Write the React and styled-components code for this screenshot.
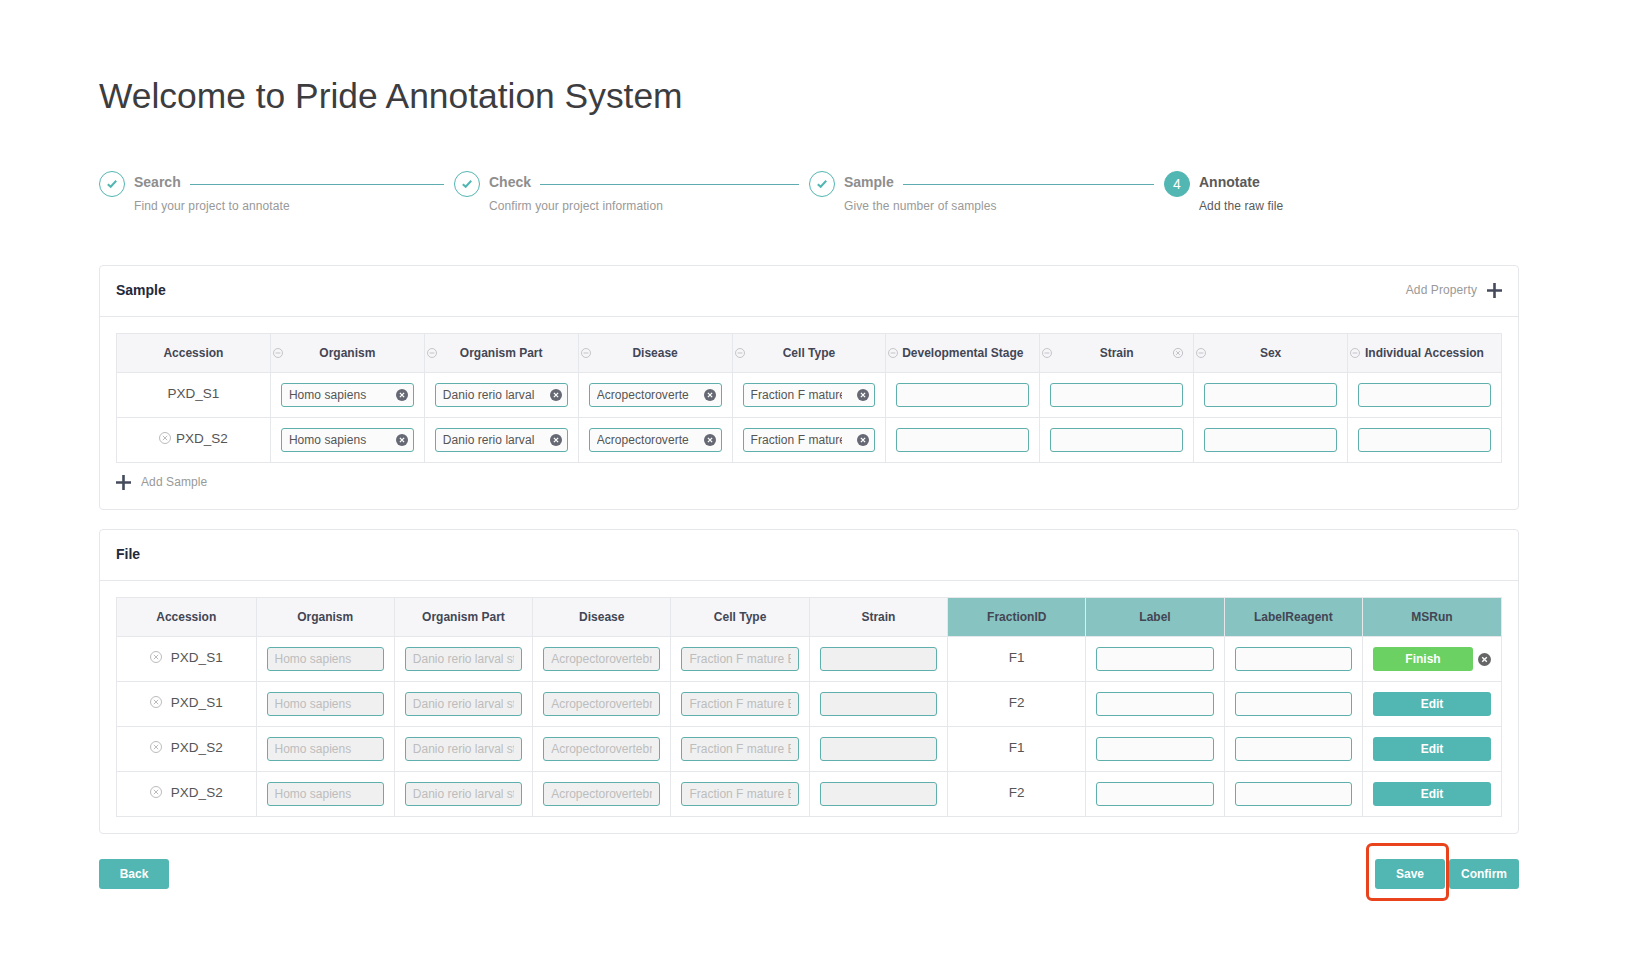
import React from 'react';
import styled, { createGlobalStyle } from 'styled-components';

const teal = '#52b6b2';
const line = '#e6e7eb';

const GlobalStyle = createGlobalStyle`
  html, body {
    margin: 0;
    background: #fff;
    font-family: "Liberation Sans", Arial, sans-serif;
  }
`;

const Page = styled.div`
  width: 1420px;
  min-height: 878px;
  padding: 75px 132px 0 99px;
`;

const Title = styled.h1`
  margin: 0 0 54px;
  font-size: 35.4px;
  line-height: 42px;
  font-weight: 400;
  color: #3d3d3f;
`;

const Steps = styled.div`
  display: grid;
  grid-template-columns: repeat(4, 355px);
  margin-bottom: 49px;
`;

const Step = styled.div`
  display: flex;
  padding-right: 10px;
`;

const StepIcon = styled.div`
  flex: none;
  width: 26px;
  height: 26px;
  margin-right: 9px;
  box-sizing: border-box;
  border-radius: 50%;
  border: 1px solid ${teal};
  background: ${(p) => (p.$active ? teal : '#fff')};
  color: ${(p) => (p.$active ? '#fff' : teal)};
  display: flex;
  align-items: center;
  justify-content: center;
  font-size: 14px;
`;

const StepBody = styled.div`
  flex: 1;
`;

const StepHead = styled.div`
  display: flex;
  align-items: center;
  height: 22px;
  gap: 9px;
`;

const StepTitle = styled.div`
  font-size: 14px;
  font-weight: 700;
  color: ${(p) => (p.$active ? '#5a5a5a' : '#8e8e8e')};
`;

const StepLine = styled.div`
  flex: 1;
  height: 1px;
  margin-top: 4px;
  background: #5dadb0;
`;

const StepDesc = styled.div`
  margin-top: 3px;
  font-size: 12px;
  line-height: 20px;
  letter-spacing: 0.1px;
  color: ${(p) => (p.$active ? '#5a5a5a' : '#999')};
`;

const Card = styled.section`
  border: 1px solid ${line};
  border-radius: 4px;
  margin-bottom: 19px;
  background: #fff;
`;

const CardHead = styled.div`
  height: 48px;
  padding: 0 16px 2px;
  display: flex;
  align-items: center;
  justify-content: space-between;
  border-bottom: 1px solid ${line};
`;

const CardTitle = styled.div`
  font-size: 14px;
  font-weight: 700;
  color: #23283a;
`;

const CardBody = styled.div`
  padding: 16px 16px ${(p) => p.$bottom}px;
`;

const AddLink = styled.div`
  display: flex;
  align-items: center;
  gap: 10px;
  font-size: 12px;
  letter-spacing: 0.1px;
  color: #999;
`;

const AddRow = styled(AddLink)`
  height: 38px;
`;

const Table = styled.table`
  width: 1386px;
  table-layout: fixed;
  border-collapse: collapse;
  font-size: 13.5px;
`;

const Th = styled.th`
  position: relative;
  width: ${(p) => p.$width || 'auto'};
  height: 38px;
  padding: 0;
  border: 1px solid ${line};
  background: ${(p) => (p.$teal ? '#87c3c1' : '#f6f6f9')};
  font-size: 12px;
  font-weight: 700;
  color: #434654;
  text-align: center;
`;

const Td = styled.td`
  height: 44px;
  padding: 0 10px;
  border: 1px solid ${line};
  text-align: center;
  color: #555;
`;

const Accession = styled.div`
  display: flex;
  align-items: center;
  justify-content: center;
  gap: ${(p) => p.$gap}px;
  margin-bottom: 4px;
`;

const HeadIcon = styled.span`
  position: absolute;
  top: 14px;
  left: ${(p) => (p.$right ? 'auto' : '2px')};
  right: ${(p) => (p.$right ? '10px' : 'auto')};
  display: flex;
  color: #b9b9bd;
`;

const InputWrap = styled.div`
  position: relative;
  display: flex;
`;

const Input = styled.input`
  width: 100%;
  height: 24px;
  box-sizing: border-box;
  margin: 0;
  padding: ${(p) => (p.$clearable ? '0 32px 0 7px' : '0 7px')};
  border: 1px solid #5fb0ac;
  border-radius: 3px;
  outline: none;
  font-family: inherit;
  font-size: 12px;
  letter-spacing: 0.05px;
  color: #555;
  background: #fbfbfb;

  &:disabled {
    background: #f0f0f0;
    color: #bdbdbd;
    letter-spacing: 0;
    -webkit-text-fill-color: #bdbdbd;
    opacity: 1;
  }
`;

const ClearSpot = styled.span`
  position: absolute;
  top: 6px;
  right: 6px;
  display: flex;
`;

const Button = styled.button`
  height: ${(p) => (p.$big ? 30 : 24)}px;
  width: ${(p) => p.$width || '100%'};
  padding: 0;
  border: 0;
  border-radius: 3px;
  background: ${(p) => (p.$green ? '#6ad162' : teal)};
  color: #fff;
  font-family: inherit;
  font-size: 12px;
  font-weight: 700;
`;

const RunCell = styled.div`
  display: flex;
  align-items: center;
  justify-content: space-between;
`;

const Footer = styled.div`
  display: flex;
  align-items: center;
  justify-content: space-between;
  margin-top: 25px;
`;

const FooterRight = styled.div`
  display: flex;
  gap: 4px;
`;

const SaveSpot = styled.div`
  position: relative;
  display: flex;

  &::after {
    content: '';
    position: absolute;
    inset: -16px -4px -12px -9px;
    border: 3px solid #e8431c;
    border-radius: 6px;
    pointer-events: none;
  }
`;

const CheckIcon = () => (
  <svg width="12" height="10" viewBox="0 0 12 10" fill="none">
    <path d="M1.8 5.2 L4.7 7.8 L10.2 1.8" stroke="currentColor" strokeWidth="2" />
  </svg>
);

const Plus = () => (
  <svg width="15" height="15" viewBox="0 0 15 15">
    <path d="M0 6.2h15v2.6H0zM6.2 0h2.6v15H6.2z" fill="#454b5c" />
  </svg>
);

const MinusCircle = () => (
  <svg width="10" height="10" viewBox="0 0 10 10" fill="none" stroke="currentColor" strokeWidth="0.8">
    <circle cx="5" cy="5" r="4.5" />
    <path d="M2.6 5h4.8" />
  </svg>
);

const XCircle = ({ size = 12, color = '#a9a9ad' }) => (
  <svg width={size} height={size} viewBox="0 0 12 12" fill="none" stroke={color} strokeWidth="0.8">
    <circle cx="6" cy="6" r="5.5" />
    <path d="M3.8 3.8l4.4 4.4M8.2 3.8l-4.4 4.4" />
  </svg>
);

const ClearIcon = ({ size = 12, color = '#666974' }) => (
  <svg width={size} height={size} viewBox="0 0 12 12" fill="none">
    <circle cx="6" cy="6" r="6" fill={color} />
    <path d="M3.9 3.9l4.2 4.2M8.1 3.9l-4.2 4.2" stroke="#fff" strokeWidth="1.3" />
  </svg>
);

const steps = [
  { title: 'Search', desc: 'Find your project to annotate' },
  { title: 'Check', desc: 'Confirm your project information' },
  { title: 'Sample', desc: 'Give the number of samples' },
  { title: 'Annotate', desc: 'Add the raw file', active: true },
];

const sampleColumns = ['Organism', 'Organism Part', 'Disease', 'Cell Type', 'Developmental Stage', 'Strain', 'Sex', 'Individual Accession'];
const sampleValues = ['Homo sapiens', 'Danio rerio larval stage', 'Acropectorovertebral', 'Fraction F mature B', '', '', '', ''];
const fileColumns = ['Organism', 'Organism Part', 'Disease', 'Cell Type', 'Strain'];
const fileValues = ['Homo sapiens', 'Danio rerio larval stage', 'Acropectorovertebral', 'Fraction F mature B', ''];
const tealColumns = ['FractionID', 'Label', 'LabelReagent', 'MSRun'];
const fileRows = [
  { id: 'PXD_S1', fraction: 'F1', finished: true },
  { id: 'PXD_S1', fraction: 'F2' },
  { id: 'PXD_S2', fraction: 'F1' },
  { id: 'PXD_S2', fraction: 'F2' },
];

const SampleCell = ({ value }) => (
  <Td>
    <InputWrap>
      <Input readOnly value={value} $clearable={!!value} />
      {value && (
        <ClearSpot>
          <ClearIcon />
        </ClearSpot>
      )}
    </InputWrap>
  </Td>
);

const App = () => (
  <Page>
    <GlobalStyle />
    <Title>Welcome to Pride Annotation System</Title>
    <Steps>
      {steps.map((step, i) => (
        <Step key={step.title}>
          <StepIcon $active={step.active}>{step.active ? i + 1 : <CheckIcon />}</StepIcon>
          <StepBody>
            <StepHead>
              <StepTitle $active={step.active}>{step.title}</StepTitle>
              {!step.active && <StepLine />}
            </StepHead>
            <StepDesc $active={step.active}>{step.desc}</StepDesc>
          </StepBody>
        </Step>
      ))}
    </Steps>

    <Card>
      <CardHead>
        <CardTitle>Sample</CardTitle>
        <AddLink>
          Add Property
          <Plus />
        </AddLink>
      </CardHead>
      <CardBody $bottom={8}>
        <Table>
          <thead>
            <tr>
              <Th>Accession</Th>
              {sampleColumns.map((name) => (
                <Th key={name}>
                  <HeadIcon>
                    <MinusCircle />
                  </HeadIcon>
                  {name}
                  {name === 'Strain' && (
                    <HeadIcon $right>
                      <XCircle size={10} />
                    </HeadIcon>
                  )}
                </Th>
              ))}
            </tr>
          </thead>
          <tbody>
            <tr>
              <Td>
                <Accession $gap={5}>PXD_S1</Accession>
              </Td>
              {sampleValues.map((value, i) => (
                <SampleCell key={i} value={value} />
              ))}
            </tr>
            <tr>
              <Td>
                <Accession $gap={5}>
                  <XCircle />
                  PXD_S2
                </Accession>
              </Td>
              {sampleValues.map((value, i) => (
                <SampleCell key={i} value={value} />
              ))}
            </tr>
          </tbody>
        </Table>
        <AddRow>
          <Plus />
          Add Sample
        </AddRow>
      </CardBody>
    </Card>

    <Card>
      <CardHead>
        <CardTitle>File</CardTitle>
      </CardHead>
      <CardBody $bottom={16}>
        <Table>
          <thead>
            <tr>
              <Th $width="138.5px">Accession</Th>
              {fileColumns.map((name) => (
                <Th key={name}>{name}</Th>
              ))}
              {tealColumns.map((name) => (
                <Th key={name} $teal $width={name === 'MSRun' ? '138px' : undefined}>
                  {name}
                </Th>
              ))}
            </tr>
          </thead>
          <tbody>
            {fileRows.map((row, r) => (
              <tr key={r}>
                <Td>
                  <Accession $gap={9}>
                    <XCircle />
                    {row.id}
                  </Accession>
                </Td>
                {fileValues.map((value, i) => (
                  <Td key={i}>
                    <InputWrap>
                      <Input disabled value={value} />
                    </InputWrap>
                  </Td>
                ))}
                <Td>
                  <Accession>{row.fraction}</Accession>
                </Td>
                <Td>
                  <InputWrap>
                    <Input readOnly value="" />
                  </InputWrap>
                </Td>
                <Td>
                  <InputWrap>
                    <Input readOnly value="" />
                  </InputWrap>
                </Td>
                <Td>
                  {row.finished ? (
                    <RunCell>
                      <Button $green $width="100px">
                        Finish
                      </Button>
                      <ClearIcon size={13} color="#666" />
                    </RunCell>
                  ) : (
                    <Button>Edit</Button>
                  )}
                </Td>
              </tr>
            ))}
          </tbody>
        </Table>
      </CardBody>
    </Card>

    <Footer>
      <Button $big $width="70px">
        Back
      </Button>
      <FooterRight>
        <SaveSpot>
          <Button $big $width="70px">
            Save
          </Button>
        </SaveSpot>
        <Button $big $width="70px">
          Confirm
        </Button>
      </FooterRight>
    </Footer>
  </Page>
);

export default App;
